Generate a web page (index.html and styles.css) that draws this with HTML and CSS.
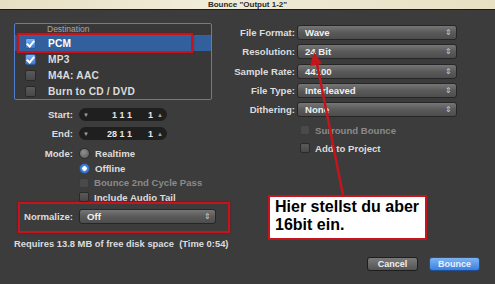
FILE: index.html
```html
<!DOCTYPE html>
<html lang="de">

<head>
    <meta charset="UTF-8">
    <meta name="viewport" content="width=device-width, initial-scale=1.0">
    <title>Bounce "Output 1-2"</title>
    <link rel="stylesheet" href="styles.css">
</head>

<body>
    <div class="window">
        <div class="titlebar">Bounce "Output 1-2"</div>

        <div class="main">
            <!-- left column: destinations, range, mode -->
            <div class="col-left">
                <div class="dest-list">
                    <div class="list-head">Destination</div>
                    <div class="list-row selected"><span class="check on"></span>PCM</div>
                    <div class="list-row"><span class="check on"></span>MP3</div>
                    <div class="list-row"><span class="check"></span>M4A: AAC</div>
                    <div class="list-row"><span class="check"></span>Burn to CD / DVD</div>
                </div>

                <div class="range">
                    <div class="range-row">
                        <span class="label">Start:</span>
                        <div class="stepper">
                            <span class="tri">&#9660;</span>
                            <span class="pos">1 1 1</span>
                            <span class="tick">1</span>
                            <span class="tri">&#9650;</span>
                        </div>
                    </div>
                    <div class="range-row">
                        <span class="label">End:</span>
                        <div class="stepper">
                            <span class="tri">&#9660;</span>
                            <span class="pos">28 1 1</span>
                            <span class="tick">1</span>
                            <span class="tri">&#9650;</span>
                        </div>
                    </div>
                </div>

                <div class="mode">
                    <div class="mode-row">
                        <span class="label">Mode:</span>
                        <span class="radio"></span>Realtime
                    </div>
                    <div class="mode-row">
                        <span class="label"></span>
                        <span class="radio on"></span>Offline
                    </div>
                    <div class="mode-row disabled">
                        <span class="label"></span>
                        <span class="check small"></span>Bounce 2nd Cycle Pass
                    </div>
                    <div class="mode-row">
                        <span class="label"></span>
                        <span class="check small"></span>Include Audio Tail
                    </div>
                </div>

                <div class="normalize">
                    <span class="label">Normalize:</span>
                    <div class="popup narrow">Off<span class="arrows">&#8661;</span></div>
                </div>

                <p class="disk-info">Requires 13.8 MB of free disk space&nbsp; (Time 0:54)</p>
            </div>

            <!-- right column: file settings -->
            <div class="col-right">
                <div class="field-row">
                    <span class="label">File Format:</span>
                    <div class="popup">Wave<span class="arrows">&#8661;</span></div>
                </div>
                <div class="field-row">
                    <span class="label">Resolution:</span>
                    <div class="popup">24 Bit<span class="arrows">&#8661;</span></div>
                </div>
                <div class="field-row">
                    <span class="label">Sample Rate:</span>
                    <div class="popup">44100<span class="arrows">&#8661;</span></div>
                </div>
                <div class="field-row">
                    <span class="label">File Type:</span>
                    <div class="popup">Interleaved<span class="arrows">&#8661;</span></div>
                </div>
                <div class="field-row">
                    <span class="label">Dithering:</span>
                    <div class="popup">None<span class="arrows">&#8661;</span></div>
                </div>
                <div class="option-row disabled"><span class="check small"></span>Surround Bounce</div>
                <div class="option-row"><span class="check small"></span>Add to Project</div>
            </div>
        </div>

        <div class="buttons">
            <button class="btn">Cancel</button>
            <button class="btn primary">Bounce</button>
        </div>

        <!-- annotations drawn over the dialog -->
        <div class="mark mark-pcm"></div>
        <div class="mark mark-normalize"></div>
        <svg class="arrow" width="495" height="284" viewBox="0 0 495 284">
            <line x1="343" y1="195" x2="317" y2="64" stroke="#c4141c" stroke-width="2.5"/>
            <polygon points="314,52 310,66 322,64" fill="#c4141c"/>
        </svg>
        <div class="callout">Hier stellst du aber<br>16bit ein.</div>
    </div>
</body>

</html>
```

FILE: styles.css
```css
body {
    margin: 0;
    padding: 0;
    background-color: #3b3b3b;
    font-family: "Liberation Sans", Arial, sans-serif;
}

.window {
    position: relative;
    width: 495px;
    height: 284px;
    overflow: hidden;
    background-color: #3c3c3c;
    color: #dcdcdc;
    font-size: 9.6px;
    font-weight: bold;
}

.titlebar {
    height: 9px;
    line-height: 10px;
    text-align: center;
    font-size: 8px;
    font-weight: bold;
    color: #2a2a2a;
    background: linear-gradient(90deg, #e6dfc4, #f1ecd8 40%, #ece6cf 70%, #e7e0c2);
    border-bottom: 1px solid #1c1c1c;
}

.main {
    display: flex;
}

.label {
    display: inline-block;
    text-align: right;
    flex-shrink: 0;
}

/* left column */

.col-left {
    width: 216px;
    margin-left: 14px;
    padding-top: 13px;
}

.dest-list {
    width: 198px;
    height: 77px;
    box-sizing: border-box;
    border: 1px solid #4f7fd0;
    border-radius: 2px;
    background-color: #383838;
}

.list-head {
    height: 11px;
    line-height: 11px;
    padding-left: 32px;
    font-size: 8.5px;
    font-weight: normal;
    color: #a9a9a9;
    border-bottom: 1px solid #5c5c5c;
}

.list-row {
    display: flex;
    align-items: center;
    height: 16px;
    padding-left: 10px;
    font-size: 10.2px;
    letter-spacing: 0.2px;
}

.list-row.selected {
    background-color: #31609c;
    color: #fff;
}

.list-head + .list-row {
    height: 15px;
}

.check {
    display: inline-block;
    width: 9px;
    height: 9px;
    margin-right: 12px;
    border-radius: 2px;
    background: linear-gradient(#5a5a5a, #484848);
    border: 1px solid #2a2a2a;
    position: relative;
}

.check.on {
    background: linear-gradient(#7fb0ee, #3d7ad6);
    border-color: #2c5a9c;
}

.check.on::after {
    content: "";
    position: absolute;
    left: 2px;
    top: 0;
    width: 3px;
    height: 6px;
    border: solid #fff;
    border-width: 0 2px 2px 0;
    transform: rotate(40deg);
}

.check.small {
    width: 8px;
    height: 8px;
    margin-right: 5px;
}

.range {
    margin-top: 8px;
}

.range-row {
    display: flex;
    align-items: center;
    height: 13px;
    margin-bottom: 6px;
}

.range-row .label {
    width: 59px;
    margin-right: 6px;
}

.stepper {
    display: flex;
    align-items: center;
    width: 88px;
    height: 13px;
    border-radius: 7px;
    background-color: #1f1f1f;
    color: #e6e6e6;
    font-size: 9px;
}

.stepper .tri {
    font-size: 6px;
    color: #a0a0a0;
    width: 14px;
    text-align: center;
}

.stepper .pos {
    text-align: right;
    flex: 1;
}

.stepper .tick {
    width: 21px;
    text-align: right;
}

.mode-row {
    display: flex;
    align-items: center;
    height: 14.7px;
}

.mode-row .label {
    width: 59px;
    margin-right: 6px;
}

.mode-row.disabled,
.option-row.disabled {
    color: #8a8a8a;
}

.mode-row.disabled .check,
.option-row.disabled .check {
    background: #4a4a4a;
    border-color: #3a3a3a;
}

.radio {
    display: inline-block;
    width: 9px;
    height: 9px;
    margin-right: 5px;
    border-radius: 50%;
    background: radial-gradient(circle at 40% 35%, #909090, #555);
    border: 1px solid #2a2a2a;
}

.radio.on {
    background: radial-gradient(circle, #fff 0 2px, #4b8be0 2.5px, #2d63b8);
    border-color: #244f92;
}

.normalize {
    display: flex;
    align-items: center;
    height: 15px;
    margin-top: 4px;
}

.normalize .label {
    width: 59px;
    margin-right: 6px;
}

.popup {
    position: relative;
    width: 160px;
    height: 15px;
    line-height: 14px;
    box-sizing: border-box;
    padding-left: 7px;
    border-radius: 3px;
    border: 1px solid #262626;
    background: linear-gradient(#767676, #5a5a5a 50%, #4d4d4d);
    color: #f0f0f0;
    font-size: 9.6px;
}

.popup.narrow {
    width: 137px;
}

.popup .arrows {
    position: absolute;
    right: 4px;
    top: 0;
    font-size: 8px;
    font-weight: normal;
    color: #d0d0d0;
}

.disk-info {
    margin: 14px 0 0;
    line-height: 12px;
    font-size: 9.4px;
    white-space: nowrap;
}

/* right column */

.col-right {
    padding-top: 15px;
}

.field-row {
    display: flex;
    align-items: center;
    height: 15px;
    margin-bottom: 4.3px;
}

.field-row .label {
    width: 65px;
    margin-right: 2px;
}

.field-row:last-of-type {
    margin-bottom: 0;
}

.option-row {
    display: flex;
    align-items: center;
    height: 18px;
    margin-left: 70px;
}

/* buttons */

.buttons {
    position: absolute;
    right: 15px;
    top: 257px;
    display: flex;
    gap: 11px;
}

.btn {
    width: 51px;
    height: 14px;
    padding: 0;
    border-radius: 3px;
    border: 1px solid #1e1e1e;
    background: linear-gradient(#7a7a7a, #545454);
    color: #f0f0f0;
    font-family: "Liberation Sans", Arial, sans-serif;
    font-size: 9px;
    font-weight: bold;
}

.btn.primary {
    border-color: #1f4f95;
    background: linear-gradient(#7db4f6, #3a7fe0);
    color: #e8f1ff;
}

/* annotations */

.mark {
    position: absolute;
    border: 2px solid #c8121c;
    box-shadow: 0 0 2px #8a0c12;
}

.mark-pcm {
    left: 17px;
    top: 33px;
    width: 172px;
    height: 16px;
}

.mark-normalize {
    left: 18px;
    top: 202px;
    width: 208px;
    height: 27px;
}

.arrow {
    position: absolute;
    left: 0;
    top: 0;
}

.callout {
    position: absolute;
    left: 268px;
    top: 195px;
    width: 150px;
    height: 40px;
    padding: 1px 0 0 5px;
    border: 2px solid #c8121c;
    background-color: #fff;
    color: #000;
    font-family: "Liberation Sans", Arial, sans-serif;
    font-size: 16px;
    font-weight: bold;
    line-height: 18px;
}
```
